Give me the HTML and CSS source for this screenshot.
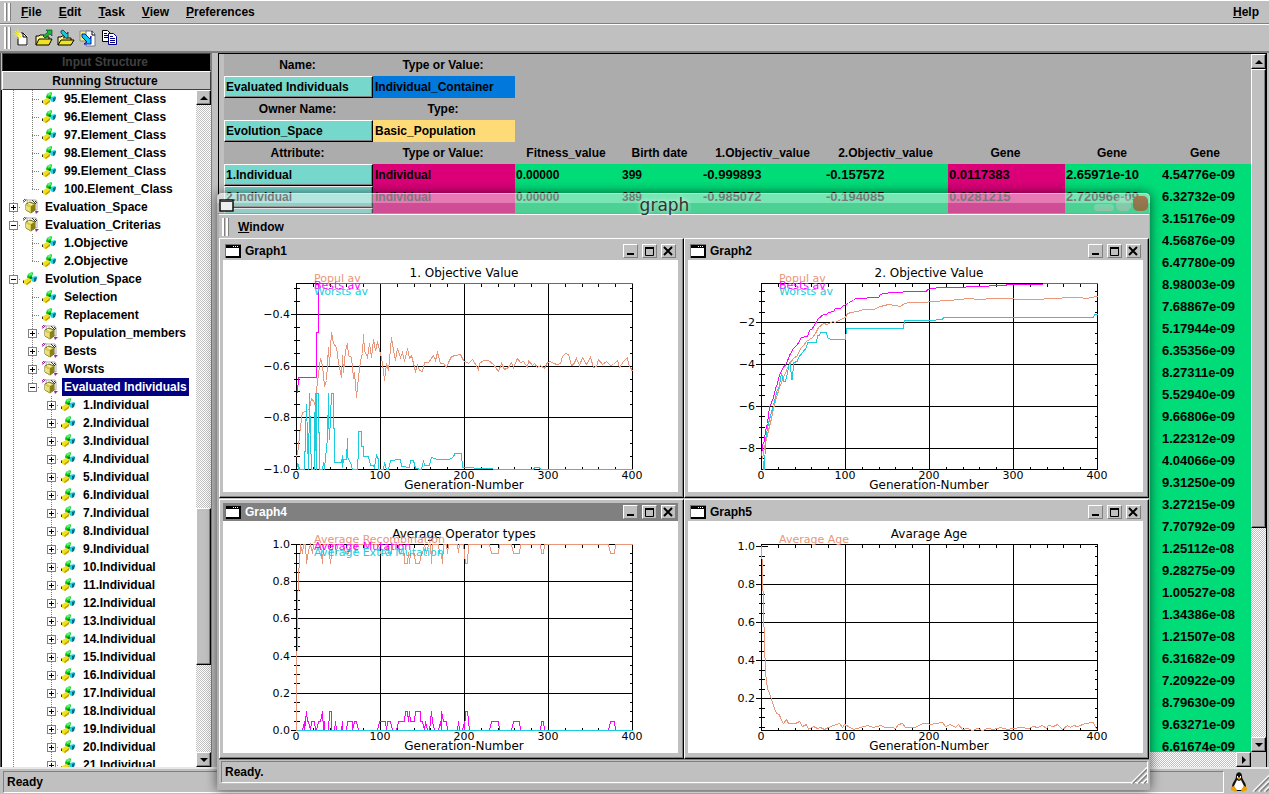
FILE: index.html
```html
<!DOCTYPE html>
<html lang="en">
<head>
<meta charset="utf-8">
<title>Evolution Space</title>
<link rel="stylesheet" href="styles.css">
</head>
<body>
<svg class="defs" aria-hidden="true">
  <symbol id="ic-class" viewBox="0 0 14 14">
    <path d="M5 2l4-2 1 1-1 4-4 2-1-2z" fill="#00c818"/><path d="M5 2l4-2v3L6 4z" fill="#5cf070"/><path d="M7 5l2 0v2H6z" fill="#046010"/>
    <path d="M9 5l4-1 1 1-1 4-3 1-2-2z" fill="#18d8e8"/><path d="M11 6l3-1-1 4-2 1z" fill="#066a80"/>
    <path d="M0 9l5-3 3 1v3l-4 3-3-1z" fill="#f0e020"/><path d="M3 12l5-4v2l-4 3z" fill="#b8a000"/><path d="M0 9l1-1v3H0z" fill="#333"/>
  </symbol>
  <symbol id="ic-box" viewBox="0 0 16 16">
    <path d="M4 1h9l1 2v8H5z" fill="#fff" stroke="#aaa"/><path d="M9 1l4 4M12 2l2 2" stroke="#333"/>
    <path d="M3 5l4-2 5 2v6l-4 3-5-3z" fill="#e2d868" stroke="#6b6410"/><path d="M3 5l5 2v7l-5-3z" fill="#d4c84c"/><path d="M8 7l4-2v6l-4 3z" fill="#8a8018"/><path d="M5 4l4 2M4 7v4M6 8v4" stroke="#fff8b0"/>
    <path d="M0 4V2l2-2h2M1 3l2-2" stroke="#a020a0" fill="none"/><path d="M12 12h4l-3 3z" fill="#a020a0"/>
  </symbol>
  <symbol id="ic-win" viewBox="0 0 16 14">
    <path d="M0 0h16v14H0z" fill="#777"/><path d="M1 1h15v13H1z" fill="#000"/><path d="M1 4h13v8H1z" fill="#fff"/><path d="M8 2h1v1H8zM10 2h1v1h-1zM12 2h1v1h-1z" fill="#fff"/>
  </symbol>
  <symbol id="ic-up" viewBox="0 0 8 8"><path d="M4 2l4 4H0z"/></symbol>
  <symbol id="ic-down" viewBox="0 0 8 8"><path d="M4 6l4-4H0z"/></symbol>
  <symbol id="ic-right" viewBox="0 0 8 8"><path d="M6 4L2 0v8z"/></symbol>
  <symbol id="ic-left" viewBox="0 0 8 8"><path d="M2 4l4-4v8z"/></symbol>
  <symbol id="ic-grip" viewBox="0 0 18 18">
    <path d="M1 18L18 1M7 18L18 7M13 18l5-5" stroke="#fff" stroke-width="1.500"/><path d="M3 18L18 3M9 18l9-9M15 18l3-3" stroke="#808080" stroke-width="1.500"/>
  </symbol>
</svg>

<header>
  <nav class="menubar" aria-label="Main menu">
    <span class="handle"></span>
    <button class="menu"><u>F</u>ile</button>
    <button class="menu"><u>E</u>dit</button>
    <button class="menu"><u>T</u>ask</button>
    <button class="menu"><u>V</u>iew</button>
    <button class="menu"><u>P</u>references</button>
    <button class="menu menu-help"><u>H</u>elp</button>
  </nav>
  <div class="toolbar" role="toolbar" aria-label="File tools">
    <span class="handle"></span>
    <button class="tool" aria-label="New"><svg viewBox="0 0 18 18"><path d="M5 4h6l4 4v9H5z" fill="#fff"/><path d="M5 8v8h9V8l-4-4H8M10 4v4h4" fill="none" stroke="#000"/><path d="M5 0v10M0 5h9M2 2l6 6M8 2L2 8" stroke="#f5ee10"/></svg></button>
    <button class="tool" aria-label="Open"><svg viewBox="0 0 18 18"><path d="M1 16V7h3l1-1h4v2h5v3" fill="#fff890" stroke="#000"/><path d="M1 16l3-6h13l-3 6z" fill="#f0e420" stroke="#000"/><path d="M8 7l5-4-2-2h6v6l-2-2-5 4z" fill="#18b828" stroke="#033" stroke-width=".6"/></svg></button>
    <button class="tool" aria-label="Import"><svg viewBox="0 0 18 18"><path d="M1 16V8h3l1-1h4v2h5v2" fill="#fff890" stroke="#000"/><path d="M1 16l3-5h13l-3 5z" fill="#f0e420" stroke="#000"/><path d="M4 2l2-1 4 4 1-2v6H6l2-1-4-4z" fill="#18c8d8" stroke="#023" stroke-width=".7"/></svg></button>
    <button class="tool" aria-label="Save"><svg viewBox="0 0 18 18"><path d="M1 2h9v10H1z" fill="#f6ee70" stroke="#889"/><path d="M7 2h6l3 3v12H7z" fill="#fff" stroke="#778"/><path d="M13 2v4h3" fill="none" stroke="#000"/><path d="M3 5l3 0 5 5 1-3v8H5l3-2-5-5z" fill="#10c8f0" stroke="#00a" stroke-width=".9"/></svg></button>
    <button class="tool" aria-label="Copy"><svg viewBox="0 0 18 18"><path d="M1.500 1.500h5l3 3v8h-8z" fill="#fff" stroke="#000"/><path d="M3 4.500h3M3 6.500h5M3 8.500h5" stroke="#000"/><path d="M7.500 4.500h5l3 3v8h-8z" fill="#fff" stroke="#000080"/><path d="M9 7.500h3M9 9.500h5M9 11.500h5M9 13.500h5" stroke="#000080"/></svg></button>
  </div>
</header>

<main class="work">
  <aside class="sidebar">
    <button class="tab tab-off">Input Structure</button>
    <button class="tab">Running Structure</button>
    <div class="tree-wrap">
      <ul class="tree" id="tree"></ul>
      <div class="vscroll">
        <button class="arrow" aria-label="Scroll up"><svg><use href="#ic-up"/></svg></button>
        <div class="track track-tree"><div class="thumb"></div></div>
        <button class="arrow" aria-label="Scroll down"><svg><use href="#ic-down"/></svg></button>
      </div>
    </div>
  </aside>

  <section class="panel">
    <div class="sheet">
      <table class="grid">
        <colgroup><col class="c-name"><col class="c-type"><col class="c-fit"><col class="c-birth"><col class="c-obj"><col class="c-obj2"><col class="c-gene"><col class="c-gene2"><col></colgroup>
        <tbody id="grid">
          <tr><th>Name:</th><th>Type or Value:</th></tr>
          <tr><td><button class="cell">Evaluated Individuals</button></td><td class="blue">Individual_Container</td></tr>
          <tr><th>Owner Name:</th><th>Type:</th></tr>
          <tr><td><button class="cell">Evolution_Space</button></td><td class="yellow">Basic_Population</td></tr>
          <tr><th>Attribute:</th><th>Type or Value:</th><th>Fitness_value</th><th>Birth date</th><th>1.Objectiv_value</th><th>2.Objectiv_value</th><th>Gene</th><th>Gene</th><th>Gene</th></tr>
        </tbody>
      </table>
    </div>
    <div class="vscroll">
      <button class="arrow" aria-label="Scroll up"><svg><use href="#ic-up"/></svg></button>
      <div class="track track-panel"><div class="thumb"></div></div>
      <button class="arrow" aria-label="Scroll down"><svg><use href="#ic-down"/></svg></button>
    </div>
    <div class="hscroll">
      <button class="arrow" aria-label="Scroll left"><svg><use href="#ic-left"/></svg></button>
      <div class="track"></div>
      <button class="arrow" aria-label="Scroll right"><svg><use href="#ic-right"/></svg></button>
    </div>
  </section>
</main>

<footer class="status">
  <span class="field">Ready</span>
  <svg class="tux" viewBox="0 0 18 20"><path d="M6 4c0-5 6-5 6 0 0 4 4 6 4 11l-3 4H5l-3-4c0-5 4-7 4-11z" fill="#111"/><path d="M7 8l2 1 2-1 3 6-2 4H6l-2-4z" fill="#fff"/><path d="M7 4h1v2H7zM10 4h1v2h-1z" fill="#fff"/><path d="M7 6l2-1 2 1-2 2zM1 15l3-1 3 4-1 2-5-2zM17 15l-3-1-3 4 1 2 5-2z" fill="#f0a000"/></svg>
  <svg class="grip"><use href="#ic-grip"/></svg>
</footer>

<section class="window" aria-label="graph">
  <div class="win-title">
    <svg class="win-icon" viewBox="0 0 15 13"><path d="M1 1h13v11H1z" fill="#eee" stroke="#111" stroke-width="1.500"/><path d="M2 2h11v1H2z" fill="#345"/></svg>
    <h1 class="win-name">graph</h1>
    <span class="win-ctl"><button class="glass min" aria-label="Minimise window"></button><button class="glass max" aria-label="Maximise window"></button><button class="glass close" aria-label="Close window"></button></span>
  </div>
  <nav class="menubar win-menu" aria-label="Graph menu"><span class="handle"></span><button class="menu"><u>W</u>indow</button></nav>
  <div class="mdi" id="mdi"></div>
  <div class="status win-status"><span class="field">Ready.</span><svg class="grip"><use href="#ic-grip"/></svg></div>
</section>
<script src="app.js"></script>
</body>
</html>
```
FILE: styles.css
```css
* { box-sizing: border-box; }
html, body { height: 100%; }
body {
  margin: 0;
  display: flex;
  flex-direction: column;
  position: relative;
  overflow: hidden;
  background: #c0c0c0;
  color: #000;
  font: bold 12px/18px "Liberation Sans", Arial, sans-serif;
}
button { font: inherit; color: inherit; padding: 0; margin: 0; border: 0; background: none; }
.defs { display: none; }

.menubar {
  display: flex;
  align-items: center;
  height: 24px;
  gap: 17px;
  padding: 0 10px 0 4px;
  border-top: 1px solid #fff;
  border-bottom: 1px solid #808080;
}
.menubar .handle { margin-right: -7px; }
.menu-help { margin-left: auto; }
.handle { width: 7px; height: 18px; background: linear-gradient(90deg, #fff 2px, #808080 2px 3px, #c0c0c0 3px 4px, #fff 4px 6px, #808080 6px); }
.toolbar {
  display: flex;
  align-items: center;
  gap: 4px;
  height: 29px;
  padding: 0 4px;
  border-top: 1px solid #fff;
  border-bottom: 2px solid #808080;
}
.toolbar .handle { height: 22px; margin-right: -2px; }
.tool { width: 18px; height: 18px; }
.tool svg { display: block; width: 18px; height: 18px; }

.work { flex: 1; min-height: 0; display: flex; gap: 6px; }
.sidebar { width: 212px; display: flex; flex-direction: column; border-left: 1px solid #555; border-right: 1px solid #808080; }
.tab {
  height: 19px;
  line-height: 16px;
  margin-left: 1px;
  padding-right: 3px;
  border: 1px solid;
  border-color: #fff #404040 #404040 #fff;
}
.tab-off { height: 18px; background: #000; color: #404040; border-color: #404040 #808080 #000 #404040; }
.tree-wrap { flex: 1; min-height: 0; display: flex; border-left: 1px solid #000; background: #fff; }
.tree { flex: 1; min-width: 0; margin: 0; padding: 0 0 0 2px; list-style: none; overflow: hidden; }
.row { display: flex; align-items: center; height: 18px; white-space: nowrap; }
.guide { flex: none; width: 19px; height: 18px; display: flex; align-items: center; justify-content: center; background-repeat: no-repeat; }
.line, .tee { background-image: repeating-linear-gradient(#808080 0 1px, transparent 1px 2px); background-size: 1px 18px; background-position: 9px 0; }
.tee { background-image: repeating-linear-gradient(#808080 0 1px, transparent 1px 2px), repeating-linear-gradient(90deg, #808080 0 1px, transparent 1px 2px); background-size: 1px 18px, 8px 1px; background-position: 9px 0, 9px 9px; }
.tee.end { background-size: 1px 9px, 8px 1px; }
.toggle { width: 9px; height: 9px; border: 1px solid #808080; background: linear-gradient(#000, #000) 50% 50% / 5px 1px no-repeat, #fff; }
.toggle.plus { background: linear-gradient(#000, #000) 50% 50% / 5px 1px no-repeat, linear-gradient(#000, #000) 50% 50% / 1px 5px no-repeat, #fff; }
.row svg { flex: none; width: 14px; height: 14px; }
.row svg.box { width: 16px; height: 16px; margin-right: -2px; }
.label { margin-left: 6px; padding: 0 2px; }
.selected { background: #000080; color: #fff; }

.vscroll { width: 15px; display: flex; flex-direction: column; }
.hscroll { height: 15px; display: flex; }
.track { flex: 1; display: flex; flex-direction: column; background: repeating-conic-gradient(#c0c0c0 0 25%, #fff 0 50%) 0 0 / 2px 2px; }
.arrow, .thumb { border: 1px solid; border-color: #fff #000 #000 #fff; box-shadow: inset -1px -1px #808080; background: #c0c0c0; }
.arrow { flex: none; width: 15px; height: 15px; display: flex; align-items: center; justify-content: center; }
.arrow svg { width: 8px; height: 8px; }
.track-tree { justify-content: flex-end; padding-bottom: 87px; }
.track-tree .thumb { height: 157px; }
.track-panel .thumb { height: 459px; }

.panel {
  flex: 1;
  min-width: 0;
  display: grid;
  grid-template: minmax(0, 1fr) 15px / minmax(0, 1fr) 15px;
  border: solid #000;
  border-width: 1px 1px 0;
  margin-right: 2px;
}
.sheet { overflow: hidden; padding-left: 5px; background: linear-gradient(90deg, #c0c0c0 5px, #acacac 5px); }
.grid { width: 100%; table-layout: fixed; border-collapse: collapse; }
.grid tr { height: 22px; }
.grid td, .grid th { height: 22px; padding: 0; white-space: nowrap; overflow: hidden; line-height: 20px; }
.grid th { padding-right: 2px; }
.grid td { padding-left: 1px; }
.grid td:first-child { padding: 0; }
.c-name { width: 149px; }
.c-type { width: 142px; }
.c-fit { width: 104px; }
.c-birth { width: 83px; }
.c-obj { width: 123px; }
.c-obj2 { width: 123px; }
.c-gene { width: 117px; }
.c-gene2 { width: 96px; }
.cell { display: block; width: 100%; height: 22px; padding-left: 1px; text-align: left; line-height: 18px; background: #76d8cd; border: 1px solid; border-color: #fff #000 #000 #fff; box-shadow: inset -1px -1px #808080; }
.grid .blue { background: #0078dc; padding-left: 2px; }
.grid .yellow { background: #ffdb78; padding-left: 2px; }
.pink { background: #dc0078; }
.grid .pink:nth-child(2) { padding-left: 2px; }
.green { background: #00dc78; }
.num { font-size: 13px; }
.grid .birth { padding-left: 3px; }

.status { display: flex; align-items: center; height: 27px; padding: 2px 0 2px 3px; border-top: 2px solid #e8e8e8; background: #c0c0c0; }
.field { flex: 1; height: 22px; padding-left: 3px; line-height: 20px; border: 1px solid; border-color: #808080 #fff #fff #808080; }
.tux { width: 18px; height: 20px; margin: 0 4px 0 6px; }
.grip { width: 17px; height: 18px; align-self: flex-end; }

.window {
  position: absolute;
  top: 193px;
  left: 217px;
  right: 119px;
  border-radius: 5px 5px 2px 2px;
  border: solid #b0b0b0;
  border-width: 0 1px 6px 2px;
  border-bottom-color: #b4b4b4;
  box-shadow: 0 0 12px rgba(0, 0, 0, .6);
}
.win-title {
  display: flex;
  align-items: center;
  justify-content: space-between;
  height: 21px;
  margin: 0 -1px 0 -2px;
  padding: 0 2px;
  border-radius: 5px 5px 0 0;
  border-top: 1px solid rgba(255, 255, 255, .6);
  border-bottom: 1px solid #999;
  background: linear-gradient(rgba(240, 240, 240, .5) 9px, rgba(190, 190, 190, .4) 9px);
}
.win-icon { width: 15px; height: 13px; margin-top: 4px; }
.win-name { margin: 2px 0 0 1px; font: 17px/20px "DejaVu Sans", sans-serif; color: #333; text-shadow: 0 0 4px #fff; }
.win-ctl { display: flex; align-items: flex-end; gap: 2px; }
.glass { width: 15px; height: 15px; border-radius: 5px; background: linear-gradient(rgba(255, 255, 255, .2), rgba(160, 190, 175, .8)); }
.glass.min { width: 20px; height: 7px; border-radius: 4px; }
.glass.close { background: linear-gradient(#a07850, #8a7448); }
.win-menu { height: 24px; background: #c0c0c0; border-bottom: 0; padding-left: 3px; }
.win-menu .handle { margin-right: -8px; }
.win-status { height: 25px; padding: 0 2px; border-top: 1px solid #808080; }
.win-status .grip { margin-left: -18px; }

.mdi { display: grid; grid-template-columns: 1fr 1fr; row-gap: 1px; background: #c0c0c0; }
.graph { min-width: 0; padding: 3px 5px 5px 3px; border: 1px solid; border-color: #fff #000 #000 #fff; box-shadow: inset -1px -1px #808080; background: #c0c0c0; }
.graph-bar { display: flex; align-items: center; gap: 4px; height: 18px; padding: 0 2px; }
.active { background: #808080; color: #fff; }
.graph-icon { width: 16px; height: 14px; }
.graph-name { margin: 0 auto 0 0; font: inherit; }
.mini { width: 15px; height: 14px; border: 1px solid; border-color: #fff #808080 #808080 #fff; background: #c0c0c0; }
.mini svg { display: block; width: 13px; height: 12px; fill: none; stroke: #000; stroke-width: 2; }
.plot { display: block; width: 100%; background: #fff; font: 11px "DejaVu Sans", sans-serif; }
.heading { font-size: 12px; }
.axis { fill: none; stroke: #000; shape-rendering: crispEdges; }
.trace { fill: none; shape-rendering: crispEdges; }
.salmon { stroke: #e9967a; }
.magenta { stroke: #f0f; }
.cyan { stroke: #1accde; }
text.salmon { stroke: none; fill: #e9967a; }
text.magenta { stroke: none; fill: #f0f; }
text.cyan { stroke: none; fill: #1accde; }
.mid { text-anchor: middle; }
.tick { text-anchor: end; }
```
FILE: app.js
```js
// ---- structure tree ----
const nodes = [];
for (let n = 95; n <= 100; n++) nodes.push({ level: 2, label: n + '.Element_Class', end: n === 100 });
nodes.push({ level: 1, label: 'Evaluation_Space', toggle: 'plus', box: true });
nodes.push({ level: 1, label: 'Evaluation_Criterias', toggle: 'minus', box: true });
nodes.push({ level: 2, label: '1.Objective' }, { level: 2, label: '2.Objective', end: true });
nodes.push({ level: 1, label: 'Evolution_Space', toggle: 'minus' });
nodes.push({ level: 2, label: 'Selection' }, { level: 2, label: 'Replacement' });
for (const label of ['Population_members', 'Bests', 'Worsts']) nodes.push({ level: 2, label, toggle: 'plus', box: true });
nodes.push({ level: 2, label: 'Evaluated Individuals', toggle: 'minus', box: true, selected: true, end: true });
for (let n = 1; n <= 21; n++) nodes.push({ level: 3, label: n + '.Individual', toggle: 'plus' });

document.getElementById('tree').innerHTML = nodes.map(n => {
  let guides = '';
  for (let l = 1; l < n.level; l++) guides += `<span class="guide ${l === 1 ? 'line' : ''}"></span>`;
  const toggle = n.toggle ? `<button class="toggle ${n.toggle}" aria-label="Toggle ${n.label}"></button>` : '';
  guides += `<span class="guide tee ${n.end ? 'end' : ''}">${toggle}</span>`;
  return `<li class="row">${guides}<svg class="${n.box ? 'box' : ''}"><use href="#${n.box ? 'ic-box' : 'ic-class'}"/></svg><span class="label ${n.selected ? 'selected' : ''}">${n.label}</span></li>`;
}).join('');

// ---- individuals ----
const genes = '4.54776e-09 6.32732e-09 3.15176e-09 4.56876e-09 6.47780e-09 8.98003e-09 7.68867e-09 5.17944e-09 6.35356e-09 8.27311e-09 5.52940e-09 9.66806e-09 1.22312e-09 4.04066e-09 9.31250e-09 3.27215e-09 7.70792e-09 1.25112e-08 9.28275e-09 1.00527e-08 1.34386e-08 1.21507e-08 6.31682e-09 7.20922e-09 8.79630e-09 9.63271e-09 6.61674e-09'.split(' ');
const first = [
  ['1.Individual', 'Individual', '0.00000', '399', '-0.999893', '-0.157572', '0.0117383', '2.65971e-10'],
  ['2.Individual', 'Individual', '0.00000', '389', '-0.985072', '-0.194085', '0.0281215', '2.72096e-09']
];
document.getElementById('grid').insertAdjacentHTML('beforeend', genes.map((g, i) => {
  const r = first[i] || Array(8).fill('');
  return `<tr><td><button class="cell">${r[0]}</button></td><td class="pink">${r[1]}</td><td class="green">${r[2]}</td><td class="green birth">${r[3]}</td><td class="green num">${r[4]}</td><td class="green num">${r[5]}</td><td class="pink num">${r[6]}</td><td class="green num">${r[7]}</td><td class="green num">${g}</td></tr>`;
}).join(''));

// ---- graphs; trace points are in thirds of a pixel, measured from `origin` ----
const graphs = [
  { name: 'Graph1', title: '1. Objective Value', origin: [24, -240], base: 209, step: 51.67, labels: ['−1.0', '−0.8', '−0.6', '−0.4'],
    legend: [['salmon', 'Popul av'], ['magenta', 'Bests av'], ['cyan', 'Worsts av']],
    traces: [
      ['salmon', '244,350 248,320 252,285 258,235 262,215 275,210 283,205 288,175 297,185 300,200 304,150 308,100 314,55 320,75 326,138 332,120 338,20 342,75 347,-23 355,10 362,20 370,65 377,110 381,45 385,95 390,30 396,10 400,45 407,50 413,115 418,95 422,170 428,110 434,60 440,40 443,-17 448,30 455,50 462,10 468,50 475,-3 481,30 487,5 495,40 500,70 508,120 514,70 520,90 529,-8 535,30 540,60 547,25 555,50 560,35 567,62 576,25 583,55 588,45 595,70 601,93 607,75 613,90 620,93 628,65 640,65 655,45 660,60 667,37 675,70 685,70 692,80 700,65 707,48 720,45 735,42 745,60 760,70 770,58 778,65 788,88 792,70 805,60 820,60 835,72 850,92 858,70 868,88 880,80 888,65 895,80 905,55 915,65 925,62 935,80 940,60 950,75 958,68 967,82 975,75 988,85 995,65 1005,62 1015,70 1025,72 1035,70 1040,48 1050,40 1058,42 1068,75 1075,72 1082,55 1092,75 1102,50 1112,72 1125,50 1135,82 1143,78 1150,58 1160,72 1172,62 1185,75 1195,72 1205,60 1213,80 1225,62 1235,50 1240,72 1246,80 1252,92'],
      ['magenta', '246,160 250,112 304,112 304,-25 308,-25 308,-171 1252,-171'],
      ['cyan', '246,370 248,388 250,372 253,388 268,388 270,283 273,193 275,290 278,388 281,178 283,160 286,290 288,388 297,388 297,275 300,160 301,275 304,388 304,160 308,160 308,275 312,275 312,388 320,388 323,365 326,388 331,350 335,294 338,160 339,230 342,296 344,230 346,230 347,160 353,160 353,265 357,265 357,365 378,365 380,346 382,382 385,356 393,356 395,294 397,350 405,365 410,386 426,386 428,325 430,325 430,274 439,274 439,318 443,318 443,349 460,349 465,375 475,375 478,382 482,346 488,356 490,388 504,388 508,365 512,388 520,388 524,360 556,358 558,378 583,380 584,361 593,361 600,385 619,388 623,360 627,376 643,376 647,350 667,358 700,358 714,352 718,338 739,338 740,380 745,382 805,383 812,385 850,387 955,387 958,380 972,380 975,387 1252,387']
    ] },
  { name: 'Graph2', title: '2. Objective Value', origin: [24, 60], base: 229.4, step: 41.8, labels: ['', '−8', '−6', '−4', '−2'],
    legend: [['salmon', 'Popul av'], ['magenta', 'Bests av'], ['cyan', 'Worsts av']],
    traces: [
      ['salmon', '246,658 252,620 258,595 265,570 272,535 280,505 288,470 298,440 310,412 318,390 328,370 340,355 350,345 360,325 368,315 378,303 395,290 405,280 415,262 430,250 440,252 455,243 465,247 475,240 495,232 502,220 512,215 530,212 550,208 560,206 580,206 600,197 625,193 660,197 672,190 690,187 730,186 760,182 800,180 840,177 860,175 875,175 885,178 950,173 1050,176 1130,175 1160,171 1200,170 1215,173 1235,172 1245,168 1252,168'],
      ['magenta', '244,648 246,615 252,600 256,570 262,550 268,500 280,470 285,445 292,430 298,405 305,385 318,370 328,345 340,325 350,312 362,290 380,288 388,270 395,265 405,248 415,235 428,222 438,222 445,215 458,212 465,205 480,203 490,195 505,190 510,182 520,180 525,175 595,172 600,163 610,160 640,157 700,153 738,152 742,146 775,142 835,140 880,137 975,136 980,133 1085,133 1090,130 1252,130'],
      ['cyan', '248,660 250,688 253,688 256,600 262,560 270,525 278,495 288,455 297,435 302,400 308,424 316,424 320,395 326,367 330,368 332,418 335,418 338,365 350,363 355,350 365,335 378,322 382,307 409,307 410,286 418,286 420,275 438,275 442,290 450,296 496,296 498,265 670,265 672,241 750,241 785,237 788,232 1240,232 1243,223 1252,223']
    ] },
  { name: 'Graph4', active: true, title: 'Average Operator types', origin: [24, 63], base: 209, step: 37.2, labels: ['0.0', '0.2', '0.4', '0.6', '0.8', '1.0'],
    legend: [['salmon', 'Average Recombination'], ['magenta', 'Average Mutation'], ['cyan', 'Average Extra Mutation']],
    traces: [
      ['salmon', '244,690 244,580 246,330 250,215 253,190 256,133 260,160 264,133 270,133 274,190 280,150 284,133 290,160 294,133 315,133 320,190 325,133 340,133 345,190 350,133 360,133 363,160 366,133 385,133 390,160 400,160 405,133 418,133 420,155 424,133 490,133 495,160 510,160 515,133 520,160 527,160 530,133 548,133 552,160 566,160 568,190 577,190 580,155 583,190 585,160 598,160 600,190 613,190 617,160 622,160 626,133 632,160 638,133 645,133 648,190 652,133 668,133 672,160 678,160 680,190 683,133 692,133 697,160 700,133 725,133 728,155 732,133 745,133 750,190 757,190 760,133 823,133 829,160 850,160 853,133 889,133 894,160 912,160 916,133 976,133 979,160 983,160 986,133 1180,133 1186,160 1198,160 1200,133 1252,133'],
      ['magenta', '262,690 266,664 268,690 272,633 276,664 280,664 284,690 288,664 296,664 299,690 304,690 308,664 316,664 320,633 324,690 326,664 328,690 338,690 343,633 347,633 348,690 358,690 361,664 363,690 378,690 380,664 382,690 393,690 395,664 410,664 412,690 416,664 424,664 428,690 487,690 491,664 510,664 513,690 517,664 526,664 530,690 544,690 548,664 566,664 569,633 577,633 580,664 583,633 585,664 597,664 601,633 614,633 615,664 622,664 626,690 631,664 636,690 643,690 648,633 652,664 656,690 670,690 675,664 678,690 679,633 683,664 694,664 697,690 725,690 728,664 731,690 742,690 746,664 748,690 750,633 757,633 761,690 823,690 828,664 850,664 852,690 889,690 894,664 913,664 916,690 976,690 979,664 983,664 986,690 1180,690 1184,664 1198,664 1199,690'],
      ['cyan', '244,690 1252,690']
    ] },
  { name: 'Graph5', title: 'Avarage Age', origin: [24, 63], base: 215, step: 38, labels: ['', '0.2', '0.4', '0.6', '0.8', '1.0'],
    legend: [['salmon', 'Average Age']],
    traces: [
      ['salmon', '244,138 245,210 248,330 252,425 256,515 262,565 268,580 275,605 283,625 288,640 298,642 300,655 308,670 318,658 325,668 335,668 345,670 358,662 365,678 378,673 385,687 398,677 410,684 420,680 432,688 445,680 460,675 478,668 485,680 493,672 505,678 520,687 540,680 560,675 580,680 600,675 615,680 635,680 645,683 655,672 665,670 675,680 690,680 705,680 715,675 728,668 740,668 750,673 765,670 785,667 795,678 810,673 825,682 833,673 845,688 862,685 875,690 890,683 905,690 920,683 940,687 960,682 980,687 1000,683 1020,680 1045,683 1060,677 1070,680 1085,675 1098,683 1105,675 1120,678 1130,672 1145,687 1160,675 1170,682 1180,674 1190,678 1215,670 1240,667 1245,680 1252,687']
    ] }
];

const L = 73, R = 409, T = 23, B = 209;

function plot(g) {
  let d = `M${L} ${T}H${R}V${B}H${L}Z`;
  let text = `<text class="mid heading" x="241" y="17">${g.title}</text>`;
  for (let i = 1; i < 20; i++) {
    const x = Math.round(L + i * 16.8);
    d += i % 5 ? `M${x} ${T}v3M${x} ${B}v-3` : `M${x} ${T}V${B}`;
  }
  for (let i = 0; i <= 4; i++) text += `<text class="mid" x="${L + i * 84}" y="219">${i * 100}</text>`;
  text += `<text class="mid heading" x="241" y="229">Generation-Number</text>`;
  for (let y = g.base; y > T; y -= g.step / 4) {
    const v = Math.round(y);
    if (v < B) d += `M${L - 3} ${v}h6M${R - 3} ${v}h3`;
  }
  g.labels.forEach((label, i) => {
    const y = Math.round(g.base - i * g.step);
    if (!label) return;
    d += label === '1.0' ? `M${L - 6} ${y}h12` : `M${L - 6} ${y}H${R}`;
    text += `<text class="tick" x="67" y="${y + 4}">${label}</text>`;
  });
  const traces = g.traces.map(([color, pts]) => {
    const p = pts.split(' ').map(s => {
      const [x, y] = s.split(',');
      return Math.round((x - g.origin[0]) / 3) + ',' + Math.round((y - g.origin[1]) / 3);
    }).join(' ');
    return `<polyline class="trace ${color}" transform="translate(.5 .5)" points="${p}"/>`;
  }).join('');
  const legend = g.legend.map(([color, label], i) => `<text class="${color}" x="91" y="${[22, 29, 35][i]}">${label}</text>`).join('');
  return `<svg class="plot" viewBox="0 0 455 232" role="img" aria-label="${g.title}"><path class="axis" transform="translate(.5 .5)" d="${d}"/>${traces}${text}${legend}</svg>`;
}

document.getElementById('mdi').innerHTML = graphs.map(g => `<article class="graph">
  <div class="graph-bar ${g.active ? 'active' : ''}"><svg class="graph-icon"><use href="#ic-win"/></svg><h2 class="graph-name">${g.name}</h2>
  <button class="mini" aria-label="Minimise ${g.name}"><svg viewBox="0 0 13 12"><path d="M3 9h7"/></svg></button>
  <button class="mini" aria-label="Maximise ${g.name}"><svg viewBox="0 0 13 12"><path d="M2 3h9"/><path d="M2.500 3v7.500h8V3" stroke-width="1"/></svg></button>
  <button class="mini" aria-label="Close ${g.name}"><svg viewBox="0 0 13 12"><path d="M2 2l8 8M10 2l-8 8"/></svg></button></div>
  ${plot(g)}</article>`).join('');
```
